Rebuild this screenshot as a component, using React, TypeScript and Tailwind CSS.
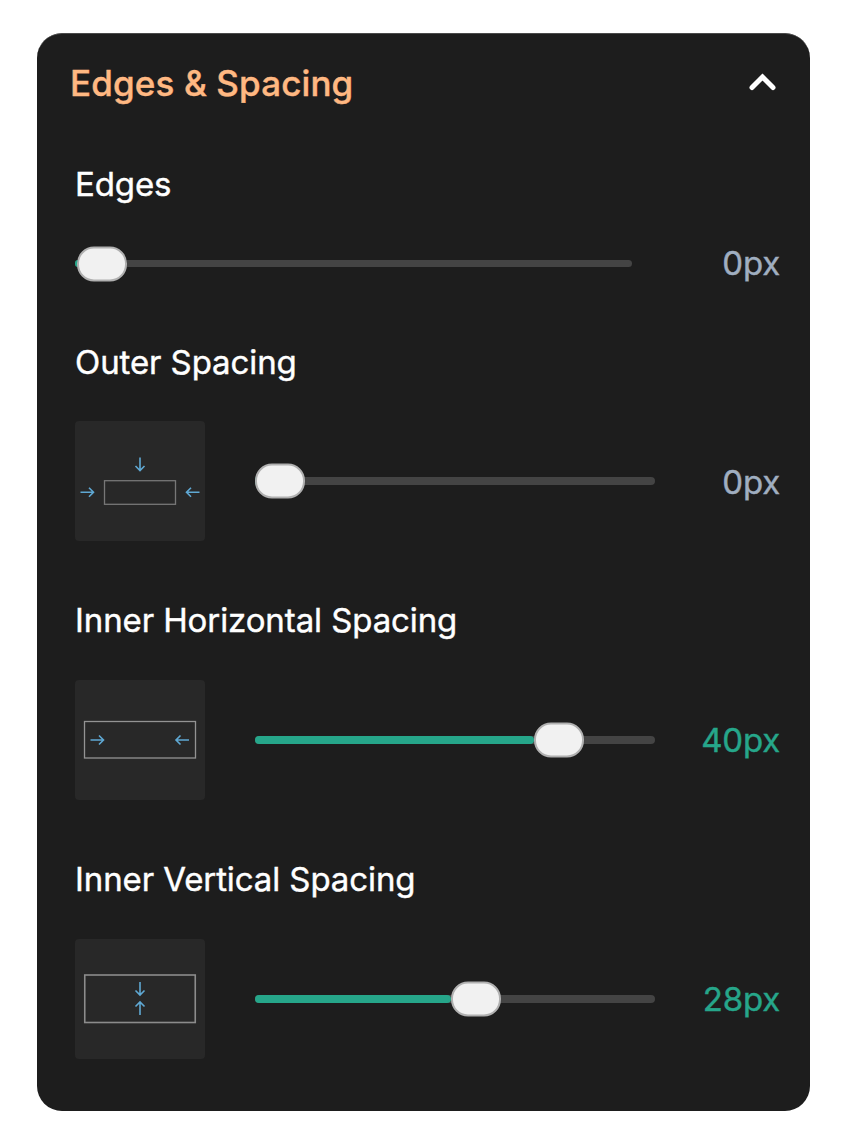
import React, { useState } from 'react';
import clsx from 'clsx';

interface SliderRowProps {
  label: string;
  value: number;
  percent: number;
  icon?: React.ReactNode;
}

const ARROW = 'M0 0H13M8.5 -4.5L13 0L8.5 4.5';

const Arrow = ({ x, y, rotate = 0 }: { x: number; y: number; rotate?: number }) => (
  <path
    d={ARROW}
    transform={`translate(${x} ${y}) rotate(${rotate})`}
    stroke="#5FA8D3"
    strokeWidth="1.6"
    fill="none"
  />
);

const OuterIcon = () => (
  <svg width="130" height="120" viewBox="0 0 130 120">
    <rect x="29.5" y="59.7" width="71" height="23.6" fill="none" stroke="#777777" strokeWidth="1.3" />
    <Arrow x={65} y={36.5} rotate={90} />
    <Arrow x={5.5} y={71.2} />
    <Arrow x={124.5} y={71.2} rotate={180} />
  </svg>
);

const HorizontalIcon = () => (
  <svg width="130" height="120" viewBox="0 0 130 120">
    <rect x="9.5" y="41.5" width="111" height="36.5" fill="none" stroke="#939393" strokeWidth="1.3" />
    <Arrow x={15.5} y={60} />
    <Arrow x={114} y={60} rotate={180} />
  </svg>
);

const VerticalIcon = () => (
  <svg width="130" height="120" viewBox="0 0 130 120">
    <rect x="9.75" y="36" width="110.5" height="47.5" fill="none" stroke="#8c8c8c" strokeWidth="1.6" />
    <Arrow x={65} y={43} rotate={90} />
    <Arrow x={65} y={76} rotate={-90} />
  </svg>
);

const SliderRow = ({ label, value, percent, icon }: SliderRowProps) => (
  <div>
    <div className="h-10 leading-10 text-[33px] tracking-[-0.1px] [-webkit-text-stroke:0.4px] text-white whitespace-nowrap">
      {label}
    </div>
    <div
      className={clsx(
        'flex items-center',
        icon ? 'h-[120px]' : 'h-[41px] -mb-px',
        value > 0 ? 'mt-10' : 'mt-[39px]'
      )}
    >
      {icon && <div className="w-[130px] h-[120px] mr-[50px] rounded-[4px] bg-[#282828] shrink-0">{icon}</div>}
      <div className={clsx('relative rounded-full bg-[#444444]', icon ? 'w-[400px] h-2' : 'w-[557px] h-[7px]')}>
        <div className="h-full rounded-full bg-[#26a68a]" style={{ width: `${Math.max(percent, 1)}%` }} />
        {/* Thumb */}
        <div
          className="absolute top-1/2 -translate-y-1/2 w-[50px] h-[35px] rounded-[17px] border-[2.5px] border-[#b0b0b0] bg-[#f1f1f1]"
          style={{ left: `${percent}%` }}
        />
      </div>
      <div
        className={clsx(
          'ml-auto text-[33px] tracking-[-0.2px] [-webkit-text-stroke:0.4px]',
          value > 0 ? 'pt-px text-[#26a68a]' : 'text-[#a0aec0]',
          icon && value === 0 && 'pt-[3px]'
        )}
      >
        {value}px
      </div>
    </div>
  </div>
);

const App = () => {
  const [open, setOpen] = useState(true);

  return (
    <main className="w-[848px] h-[1145px] bg-white pt-[33px] pl-[37px] font-['Inter',sans-serif]">
      <section className="w-[773px] h-[1078px] rounded-[25px] bg-[#1d1d1d] border-t border-[#4a4a4a]">
        <button
          onClick={() => setOpen(!open)}
          className="w-full h-[98px] pl-[33px] pr-8 flex items-center justify-between"
        >
          <span className="text-[35px] font-medium tracking-[0.12px] [-webkit-text-stroke:0.4px] text-[#ffb882] whitespace-nowrap">
            Edges &amp; Spacing
          </span>
          <svg width="30" height="22" viewBox="0 0 30 22" fill="none">
            <path d="M4 15.5L14.5 5L25 15.5" stroke="white" strokeWidth="5" strokeLinecap="round" />
          </svg>
        </button>
        {open && (
          <div className="pt-8 pl-[38px] pr-[30px] flex flex-col gap-[59px]">
            <SliderRow label="Edges" value={0} percent={0.4} />
            <SliderRow label="Outer Spacing" value={0} percent={0} icon={<OuterIcon />} />
            <SliderRow label="Inner Horizontal Spacing" value={40} percent={69.8} icon={<HorizontalIcon />} />
            <SliderRow label="Inner Vertical Spacing" value={28} percent={49} icon={<VerticalIcon />} />
          </div>
        )}
      </section>
    </main>
  );
};

export default App;
